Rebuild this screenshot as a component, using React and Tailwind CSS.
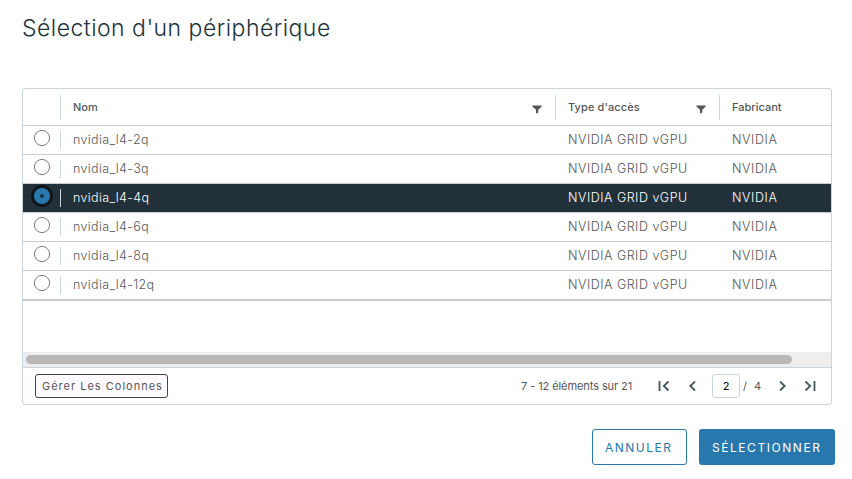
const rows = ['2q', '3q', '4q', '6q', '8q', '12q'];

function Filter() {
  return (
    <svg className="mt-[4px] h-[9px] w-[10px]" viewBox="0 0 10 9" fill="#565656">
      <path d="M0.5 0.5H9.5V1.8L6.3 4.8V7.6L4 8.8V4.8L0.5 1.8Z" />
    </svg>
  );
}

function Radio({ checked }) {
  if (checked) {
    return (
      <svg className="h-[22px] w-[22px] shrink-0" viewBox="0 0 22 22">
        <circle cx="11" cy="11" r="9.5" fill="#2877ad" stroke="#101414" strokeWidth="2.8" />
        <circle cx="11" cy="11" r="2" fill="#1b3240" />
      </svg>
    );
  }
  return (
    <svg className="h-[22px] w-[22px] shrink-0" viewBox="0 0 22 22">
      <circle cx="11" cy="11" r="7.6" fill="white" stroke="#7c7c7c" strokeWidth="1" />
    </svg>
  );
}

function Arrow({ d }) {
  return (
    <svg className="h-3 w-3" viewBox="0 0 12 12" fill="none" stroke="#435761" strokeWidth="1.8">
      <path d={d} />
    </svg>
  );
}

export default function App() {
  return (
    <div className="h-[479px] w-[852px] overflow-hidden bg-white pl-[22px] font-['Inter','Liberation_Sans',sans-serif] text-[#565656]">
      <h1 className="h-[88px] pt-[12px] text-[23px] leading-8 font-light tracking-[0.48px] whitespace-nowrap text-[#21333b]">
        Sélection d'un périphérique
      </h1>
      <div className="flex h-[317px] w-[810px] flex-col overflow-hidden rounded-[3px] border border-[#cbd4d8]">
        <div className="flex h-[37px] shrink-0 items-center border-b border-[#cccccc] text-[11px] font-medium whitespace-nowrap">
          <div className="h-[25px] w-[38px] border-r border-[#cbd4d8]" />
          <div className="flex h-[25px] w-[495px] items-center justify-between border-r border-[#cbd4d8] pr-[13px] pl-3">
            <span>Nom</span>
            <Filter />
          </div>
          <div className="flex h-[25px] w-[164px] items-center justify-between border-r border-[#cbd4d8] pr-[13px] pl-3">
            <span className="tracking-[0.1px]">Type d'accès</span>
            <Filter />
          </div>
          <span className="pl-3">Fabricant</span>
        </div>
        {rows.map((r) => (
          <div
            key={r}
            className={`flex h-[29px] shrink-0 items-center border-b border-[#cccccc] text-[12.5px] font-[350] tracking-[0.5px] whitespace-nowrap ${r === '4q' ? 'bg-[#22303a] text-white' : 'bg-white'}`}
          >
            <div className="flex h-[18px] w-[38px] items-center border-r border-[#cbd4d8] pb-[4px] pl-2">
              <Radio checked={r === '4q'} />
            </div>
            <span className="w-[495px] pt-px pl-3 tracking-[0.35px]">nvidia_l4-{r}</span>
            <span className="w-[164px] pt-px pl-3">NVIDIA GRID vGPU</span>
            <span className="pt-px pl-3 tracking-[0.6px]">NVIDIA</span>
          </div>
        ))}
        <div className="flex-1 border-t border-[#cccccc]" />
        <div className="h-[15px] shrink-0 bg-[#eeeeee] pt-[3px] pl-[3px]">
          <div className="h-[9px] w-[766px] rounded-full bg-[#bab9ba]" />
        </div>
        <div className="flex h-[37px] shrink-0 items-center border-t border-[#cbd4d8] pl-3 text-[11px] whitespace-nowrap">
          <button className="flex h-6 w-[133px] items-center rounded-[3px] border border-[#444444] bg-[#fefaff] pl-[6px] tracking-[1px]">
            Gérer Les Colonnes
          </button>
          <span className="ml-[353px] w-[137px] tracking-[-0.08px]">7 - 12 éléments sur 21</span>
          <Arrow d="M1.5 1V11M10.5 1.5L5.8 6L10.5 10.5" />
          <span className="w-[17px]" />
          <Arrow d="M8 1.5L3.3 6L8 10.5" />
          <span className="ml-[13px] flex h-6 w-7 items-center justify-center rounded-[3px] border border-[#cbd4d8] text-black">2</span>
          <span className="ml-[3px] w-[11px]">/</span>
          <span className="w-[22px]">4</span>
          <Arrow d="M4 1.5L8.7 6L4 10.5" />
          <span className="w-4" />
          <Arrow d="M1.5 1.5L6.2 6L1.5 10.5M10.5 1V11" />
        </div>
      </div>
      <div className="mt-6 flex w-[813px] justify-end gap-3 text-[12px] whitespace-nowrap">
        <button className="flex h-9 w-[95px] items-center rounded-[3px] border border-[#2877ad] pt-0.5 pl-3 tracking-[1.5px] text-[#2877ad]">
          ANNULER
        </button>
        <button className="flex h-9 w-[136px] items-center rounded-[3px] bg-[#2877ad] pt-0.5 pl-[13px] tracking-[1.55px] text-white">
          SÉLECTIONNER
        </button>
      </div>
    </div>
  );
}
